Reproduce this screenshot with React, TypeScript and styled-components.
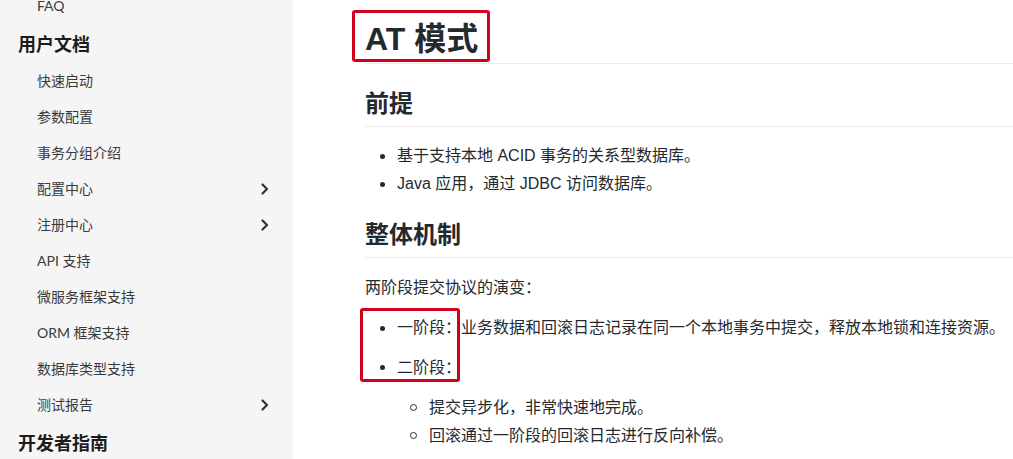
import React from "react"
import styled, { createGlobalStyle } from "styled-components"

const GlobalStyle = createGlobalStyle`
    html, body {
        margin: 0;
        padding: 0;
        background: #fff;
    }
    body {
        font-family: "Liberation Sans", "Noto Sans CJK SC", sans-serif;
        color: #24292e;
        overflow: hidden;
    }
`

const sidebar = [
    { type: "item", label: "FAQ" },
    { type: "section", label: "用户文档" },
    { type: "item", label: "快速启动" },
    { type: "item", label: "参数配置" },
    { type: "item", label: "事务分组介绍" },
    { type: "item", label: "配置中心", more: true },
    { type: "item", label: "注册中心", more: true },
    { type: "item", label: "API 支持" },
    { type: "item", label: "微服务框架支持" },
    { type: "item", label: "ORM 框架支持" },
    { type: "item", label: "数据库类型支持" },
    { type: "item", label: "测试报告", more: true },
    { type: "section", label: "开发者指南" },
]

const Chevron = () => (
    <svg width="8" height="12" viewBox="0 0 8 12">
        <polyline points="1.5,1.5 6,6 1.5,10.5" fill="none" stroke="#333" strokeWidth="2.2" strokeLinecap="round" strokeLinejoin="round" />
    </svg>
)

const App = () => {
    return (
        <>
            <GlobalStyle />
            <Page>
                <Sidebar>
                    <NavList>
                        {sidebar.map((entry, i) =>
                            entry.type === "section" ? (
                                <Section key={i}>{entry.label}</Section>
                            ) : (
                                <NavItem key={i}>
                                    <span>{entry.label}</span>
                                    {entry.more && <Chevron />}
                                </NavItem>
                            )
                        )}
                    </NavList>
                </Sidebar>
                <Main>
                    <H1>AT 模式</H1>
                    <H2>前提</H2>
                    <List>
                        <Item>基于支持本地 ACID 事务的关系型数据库。</Item>
                        <Item>Java 应用，通过 JDBC 访问数据库。</Item>
                    </List>
                    <H2 $top={22}>整体机制</H2>
                    <Para>两阶段提交协议的演变：</Para>
                    <List $loose>
                        <Item $loose>一阶段：业务数据和回滚日志记录在同一个本地事务中提交，释放本地锁和连接资源。</Item>
                        <Item $loose>
                            二阶段：
                            <SubList>
                                <SubItem>提交异步化，非常快速地完成。</SubItem>
                                <SubItem>回滚通过一阶段的回滚日志进行反向补偿。</SubItem>
                            </SubList>
                        </Item>
                    </List>
                    <Highlight $left={59} $top={10} $width={138} $height={52} />
                    <Highlight $left={67} $top={308} $width={100} $height={74} />
                </Main>
            </Page>
        </>
    )
}

const Page = styled.div`
    display: flex;
    width: 100%;
    height: 459px;
    overflow: hidden;
`

const Sidebar = styled.aside`
    width: 293px;
    flex-shrink: 0;
    background: #f5f5f5;
    overflow: hidden;
    font-family: Lato, "Noto Sans CJK SC", sans-serif;
`

const NavList = styled.div`
    display: flex;
    flex-direction: column;
    margin-top: -13px;
`

const NavItem = styled.div`
    height: 36px;
    display: flex;
    align-items: center;
    justify-content: space-between;
    padding: 0 24px 0 37px;
    font-size: 14px;
    color: #3a3a3a;

    svg{
        margin-top: 1px;
    }
`

const Section = styled.div`
    height: 38px;
    display: flex;
    align-items: center;
    padding-left: 18px;
    padding-top: 1px;
    font-size: 18px;
    font-weight: 600;
    color: #1c1c1c;
`

const Main = styled.main`
    position: relative;
    flex: 1;
    padding: 19px 0 0 72px;
    min-width: 0;
`

const H1 = styled.h1`
    margin: 0;
    font-size: 32px;
    line-height: 40px;
    font-weight: 700;
    padding-bottom: 4px;
    border-bottom: 1px solid #eaecef;
`

const H2 = styled.h2<{ $top?: number }>`
    margin: ${p => p.$top ?? 25}px 0 0;
    font-size: 24px;
    line-height: 30px;
    font-weight: 700;
    padding-bottom: 7px;
    border-bottom: 1px solid #eaecef;
`

const Para = styled.p`
    margin: 16px 0 0;
    font-size: 16px;
    line-height: 28px;
`

const List = styled.ul<{ $loose?: boolean }>`
    list-style: none;
    margin: ${p => (p.$loose ? 12 : 15)}px 0 0;
    padding: 0 0 0 32px;
`

const Item = styled.li<{ $loose?: boolean }>`
    position: relative;
    font-size: 16px;
    line-height: 28px;
    white-space: nowrap;
    margin-bottom: ${p => (p.$loose ? 11.5 : 0)}px;

    &::before{
        content: "";
        position: absolute;
        left: -17px;
        top: 11.5px;
        width: 5px;
        height: 5px;
        border-radius: 50%;
        background: #24292e;
    }
`

const SubList = styled.ul`
    list-style: none;
    margin: 12px 0 0;
    padding: 0 0 0 32px;
`

const SubItem = styled.li`
    position: relative;
    font-size: 16px;
    line-height: 28px;

    &::before{
        content: "";
        position: absolute;
        left: -19px;
        top: 10.5px;
        width: 5px;
        height: 5px;
        border-radius: 50%;
        border: 1px solid #24292e;
    }
`

const Highlight = styled.div<{ $left: number; $top: number; $width: number; $height: number }>`
    position: absolute;
    left: ${p => p.$left}px;
    top: ${p => p.$top}px;
    width: ${p => p.$width}px;
    height: ${p => p.$height}px;
    box-sizing: border-box;
    border: 3px solid #d0021b;
    border-radius: 3px;
    pointer-events: none;
`

export default App
